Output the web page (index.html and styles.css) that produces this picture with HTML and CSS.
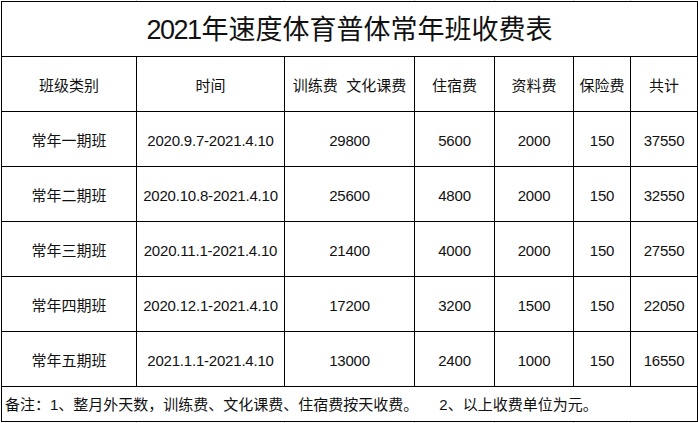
FILE: index.html
```html
<!DOCTYPE html>
<html lang="zh-CN">
<head>
<meta charset="utf-8">
<title>2021年速度体育普体常年班收费表</title>
<link rel="stylesheet" href="styles.css">
</head>
<body>
<div class="sheet">
  <div class="edge"><i></i><i></i><i></i><i></i><i></i><i></i><i></i></div>
  <div class="table">
    <div class="cell title"><span class="yr">2021</span>年速度体育普体常年班收费表</div>

    <div class="cell head">班级类别</div>
    <div class="cell head">时间</div>
    <div class="cell head">训练费&nbsp;&nbsp;文化课费</div>
    <div class="cell head">住宿费</div>
    <div class="cell head">资料费</div>
    <div class="cell head">保险费</div>
    <div class="cell head">共计</div>

    <div class="cell">常年一期班</div>
    <div class="cell num">2020.9.7-2021.4.10</div>
    <div class="cell num">29800</div>
    <div class="cell num">5600</div>
    <div class="cell num">2000</div>
    <div class="cell num">150</div>
    <div class="cell num">37550</div>

    <div class="cell">常年二期班</div>
    <div class="cell num">2020.10.8-2021.4.10</div>
    <div class="cell num">25600</div>
    <div class="cell num">4800</div>
    <div class="cell num">2000</div>
    <div class="cell num">150</div>
    <div class="cell num">32550</div>

    <div class="cell">常年三期班</div>
    <div class="cell num">2020.11.1-2021.4.10</div>
    <div class="cell num">21400</div>
    <div class="cell num">4000</div>
    <div class="cell num">2000</div>
    <div class="cell num">150</div>
    <div class="cell num">27550</div>

    <div class="cell">常年四期班</div>
    <div class="cell num">2020.12.1-2021.4.10</div>
    <div class="cell num">17200</div>
    <div class="cell num">3200</div>
    <div class="cell num">1500</div>
    <div class="cell num">150</div>
    <div class="cell num">22050</div>

    <div class="cell">常年五期班</div>
    <div class="cell num">2021.1.1-2021.4.10</div>
    <div class="cell num">13000</div>
    <div class="cell num">2400</div>
    <div class="cell num">1000</div>
    <div class="cell num">150</div>
    <div class="cell num">16550</div>

    <div class="cell note"><span>备注：1、整月外天数，训练费、文化课费、住宿费按天收费。</span><span class="note2">2、以上收费单位为元。</span></div>
  </div>
  <div class="edge"><i></i><i></i><i></i><i></i><i></i><i></i><i></i></div>
</div>
</body>
</html>
```

FILE: styles.css
```css
html, body {
  margin: 0;
  padding: 0;
  background: #fff;
}

body {
  font-family: "Liberation Sans", "Noto Sans CJK SC", sans-serif;
  color: #111;
}

.sheet {
  width: 698px;
  height: 423px;
  overflow: hidden;
}

.edge {
  display: flex;
  height: 1px;
}

.edge i {
  display: block;
  box-sizing: border-box;
  height: 1px;
  border-right: 1px solid #d4d4d4;
}

.edge i:nth-child(1) { width: 137px; }
.edge i:nth-child(2) { width: 148px; }
.edge i:nth-child(3) { width: 130px; }
.edge i:nth-child(4) { width: 80px; }
.edge i:nth-child(5) { width: 79px; }
.edge i:nth-child(6) { width: 57px; }
.edge i:nth-child(7) { width: 67px; border-right: 0; }

.table {
  display: grid;
  grid-template-columns: 135px 148px 130px 80px 79px 57px 67px;
  grid-template-rows: 55px repeat(6, 55px) 35px;
  width: max-content;
  margin-left: 1px;
  border-top: 1px solid #000;
  border-left: 1px solid #000;
}

.cell {
  box-sizing: border-box;
  border-right: 1px solid #000;
  border-bottom: 1px solid #000;
  display: flex;
  align-items: center;
  justify-content: center;
  padding-top: 3px;
  font-size: 15px;
  line-height: 18px;
  white-space: nowrap;
}

.title {
  grid-column: 1 / -1;
  font-size: 27px;
  line-height: 32px;
  padding-top: 1px;
}

.yr {
  letter-spacing: -1.5px;
  margin-right: 1px;
}

.num {
  letter-spacing: -0.2px;
}

.note {
  grid-column: 1 / -1;
  justify-content: flex-start;
  padding-left: 3px;
  padding-top: 2px;
}

.note2 {
  margin-left: 21px;
}
```
